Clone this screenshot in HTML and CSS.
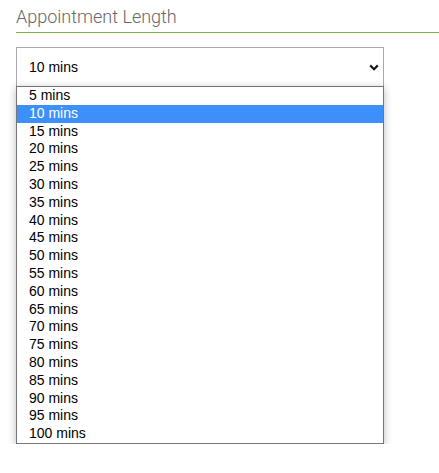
FILE: index.html
```html
<!DOCTYPE html>
<html lang="en">
<head>
<meta charset="utf-8">
<title>Appointment Length</title>
<link rel="stylesheet" href="styles.css">
</head>
<body>
<div class="panel">
  <h2 class="heading">Appointment Length</h2>
  <div class="field">
    <div class="picker">
      <span class="picker-value">10 mins</span>
      <svg class="chevron" width="10" height="7" viewBox="0 0 10 7" aria-hidden="true"><path d="M1.2 1.4 L5 5.2 L8.8 1.4" fill="none" stroke="#1a1a1a" stroke-width="2.2"/></svg>
    </div>
    <div class="menu">
      <div class="item">5 mins</div>
      <div class="item current">10 mins</div>
      <div class="item">15 mins</div>
      <div class="item">20 mins</div>
      <div class="item">25 mins</div>
      <div class="item">30 mins</div>
      <div class="item">35 mins</div>
      <div class="item">40 mins</div>
      <div class="item">45 mins</div>
      <div class="item">50 mins</div>
      <div class="item">55 mins</div>
      <div class="item">60 mins</div>
      <div class="item">65 mins</div>
      <div class="item">70 mins</div>
      <div class="item">75 mins</div>
      <div class="item">80 mins</div>
      <div class="item">85 mins</div>
      <div class="item">90 mins</div>
      <div class="item">95 mins</div>
      <div class="item">100 mins</div>
    </div>
  </div>
</div>
</body>
</html>
```
FILE: styles.css
```css
html, body {
  margin: 0;
  padding: 0;
  background: #ffffff;
}

.panel {
  padding-left: 16px;
}

.heading {
  margin: 0;
  padding-top: 6px;
  padding-bottom: 5px;
  font-family: Roboto, "Liberation Sans", sans-serif;
  font-weight: 300;
  font-size: 18px;
  line-height: 21px;
  color: #666666;
  border-bottom: 1px solid #7cb342;
}

.field {
  width: 368px;
  margin-top: 14px;
}

.picker {
  box-sizing: border-box;
  height: 39px;
  border: 1px solid #a9a9a9;
  border-bottom: none;
  background: #ffffff;
  display: flex;
  align-items: center;
  justify-content: space-between;
  padding: 0 4px 0 12px;
  font-family: "Liberation Sans", Arial, sans-serif;
  font-size: 14px;
  color: #000000;
}

.chevron {
  display: block;
}

.menu {
  box-sizing: border-box;
  width: 368px;
  background: #ffffff;
  border: 1px solid #767676;
  box-shadow: 0 2px 8px rgba(0, 0, 0, 0.28);
  font-family: "Liberation Sans", Arial, sans-serif;
  font-size: 14px;
  color: #000000;
}

.item {
  height: 17.8px;
  line-height: 17px;
  padding-left: 12px;
  box-sizing: border-box;
  white-space: nowrap;
}

.item.current {
  background: #3d8ffb;
  color: #ffffff;
}
```
